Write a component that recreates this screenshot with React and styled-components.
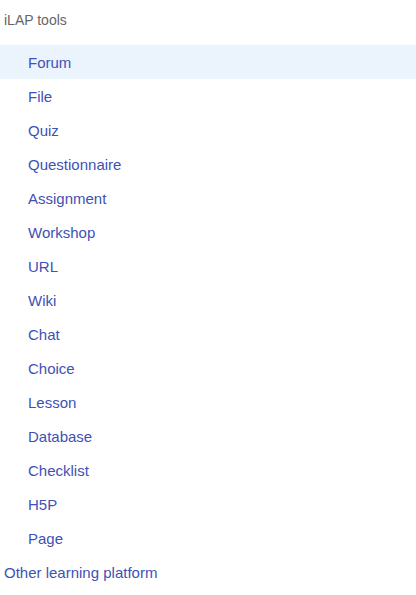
import React from 'react'
import styled, { createGlobalStyle } from 'styled-components'

const tools = [
  'Forum', 'File', 'Quiz', 'Questionnaire', 'Assignment', 'Workshop', 'URL',
  'Wiki', 'Chat', 'Choice', 'Lesson', 'Database', 'Checklist', 'H5P', 'Page',
]

const Global = createGlobalStyle`
  body {
    margin: 0;
    background: #fff;
    font-family: "Liberation Sans", Arial, sans-serif;
  }
`

const App = () => {
  return (
    <Menu>
      <Global />
      <Heading>iLAP tools</Heading>
      <List>
        {tools.map((name, i) => (
          <Item key={name} active={i === 0}>{name}</Item>
        ))}
      </List>
      <TopItem>Other learning platform</TopItem>
    </Menu>
  )
}

export default App

const Menu = styled.nav`
  display: flex;
  flex-direction: column;
  width: 416px;
`

const Heading = styled.div`
  height: 45px;
  box-sizing: border-box;
  padding: 11px 4px 0;
  font-size: 14px;
  line-height: 18px;
  color: #666;
`

const List = styled.div`
  display: flex;
  flex-direction: column;
`

const Item = styled.div`
  height: 34px;
  display: flex;
  align-items: center;
  padding-left: 28px;
  padding-top: 1px;
  box-sizing: border-box;
  font-size: 15px;
  color: #3f51b5;
  background: ${p => (p.active ? '#ebf3fc' : 'transparent')};
`

const TopItem = styled(Item)`
  padding-left: 4px;
`
